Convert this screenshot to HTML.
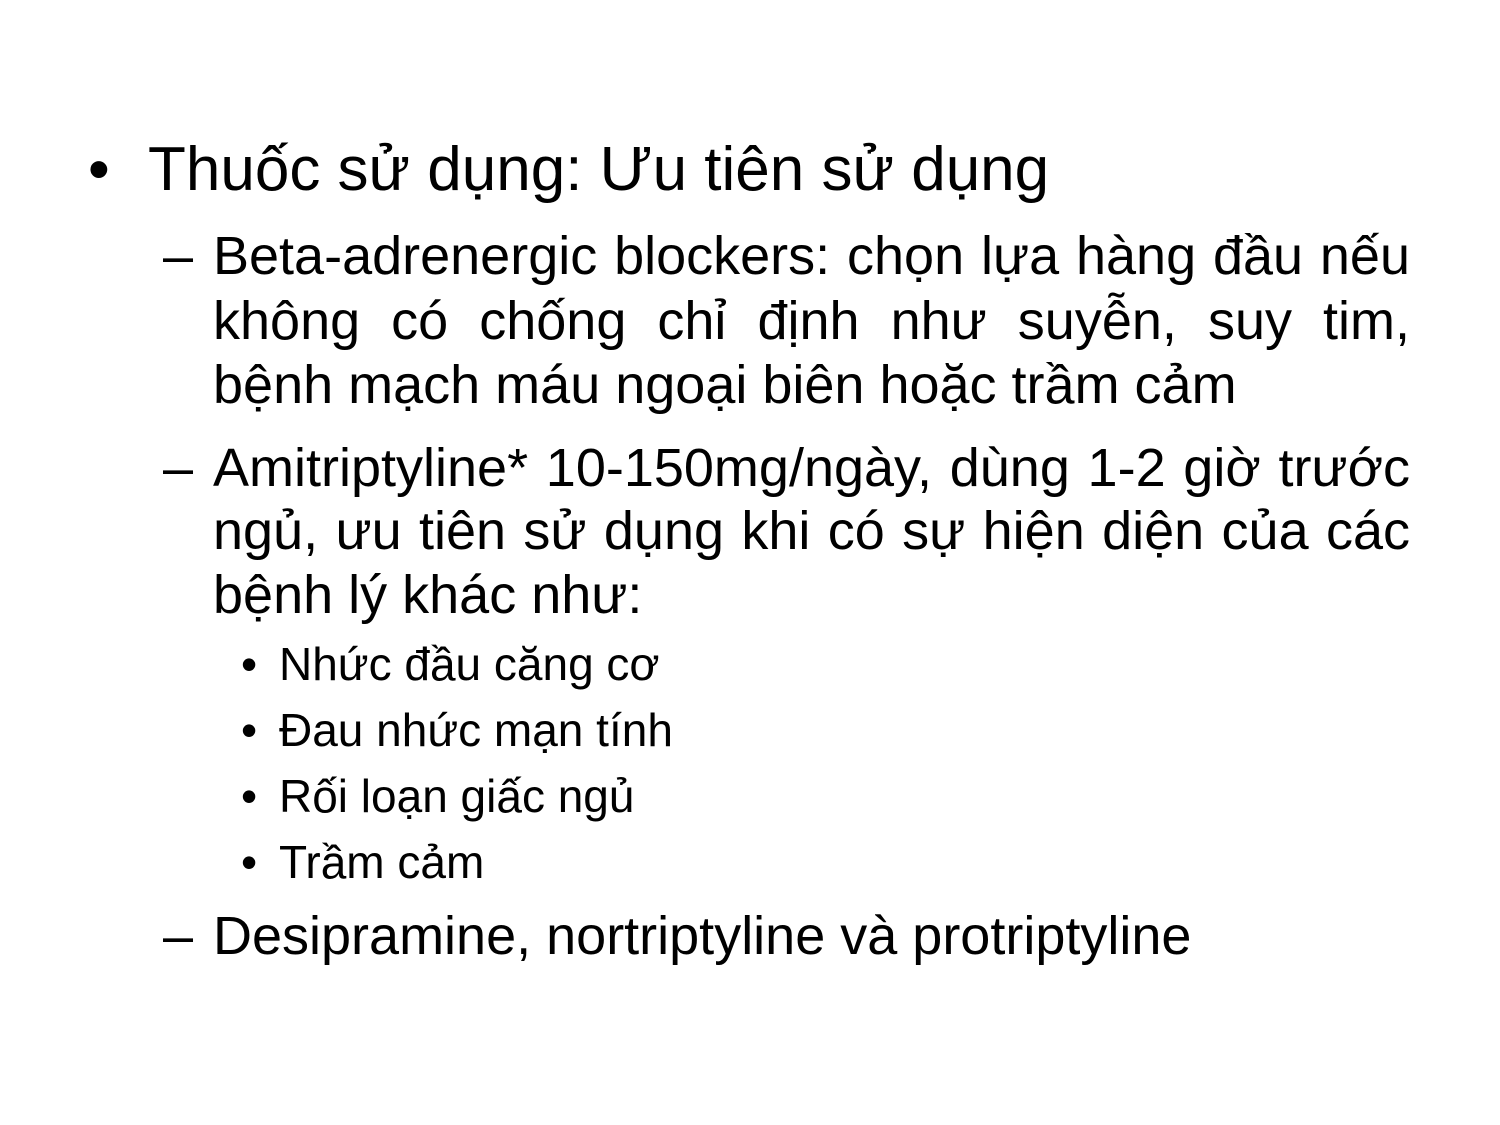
<!DOCTYPE html>
<html><head><meta charset="utf-8"><style>
html,body{margin:0;padding:0;background:#fff;}
body{width:1500px;height:1125px;position:relative;overflow:hidden;font-family:"Liberation Sans",Arial,sans-serif;color:#000;}
.l{position:absolute;white-space:nowrap;line-height:1;}
.j{text-align:justify;text-align-last:justify;white-space:normal;}
.f1{font-size:62px;}
.f2{font-size:54px;}
.f3{font-size:46px;}
</style></head><body>
<div class="l f1" style="left:88px;top:139px;">•</div>
<div class="l f1" style="left:148px;top:139px;">Thuốc sử dụng: Ưu tiên sử dụng</div>

<div class="l f2" style="left:163px;top:229px;">–</div>
<div class="l f2 j" style="left:213px;top:229px;width:1197px;">Beta-adrenergic blockers: chọn lựa hàng đầu nếu</div>
<div class="l f2 j" style="left:213px;top:294px;width:1197px;">không có chống chỉ định như suyễn, suy tim,</div>
<div class="l f2" style="left:213px;top:358px;">bệnh mạch máu ngoại biên hoặc trầm cảm</div>

<div class="l f2" style="left:163px;top:441px;">–</div>
<div class="l f2 j" style="left:213px;top:441px;width:1197px;">Amitriptyline* 10-150mg/ngày, dùng 1-2 giờ trước</div>
<div class="l f2 j" style="left:213px;top:504px;width:1197px;">ngủ, ưu tiên sử dụng khi có sự hiện diện của các</div>
<div class="l f2" style="left:213px;top:568px;">bệnh lý khác như:</div>

<div class="l f3" style="left:241px;top:641px;">•</div>
<div class="l f3" style="left:279px;top:641px;">Nhức đầu căng cơ</div>
<div class="l f3" style="left:241px;top:707px;">•</div>
<div class="l f3" style="left:279px;top:707px;">Đau nhức mạn tính</div>
<div class="l f3" style="left:241px;top:773px;">•</div>
<div class="l f3" style="left:279px;top:773px;">Rối loạn giấc ngủ</div>
<div class="l f3" style="left:241px;top:839px;">•</div>
<div class="l f3" style="left:279px;top:839px;">Trầm cảm</div>

<div class="l f2" style="left:163px;top:909px;">–</div>
<div class="l f2" style="left:213px;top:909px;">Desipramine, nortriptyline và protriptyline</div>
</body></html>
